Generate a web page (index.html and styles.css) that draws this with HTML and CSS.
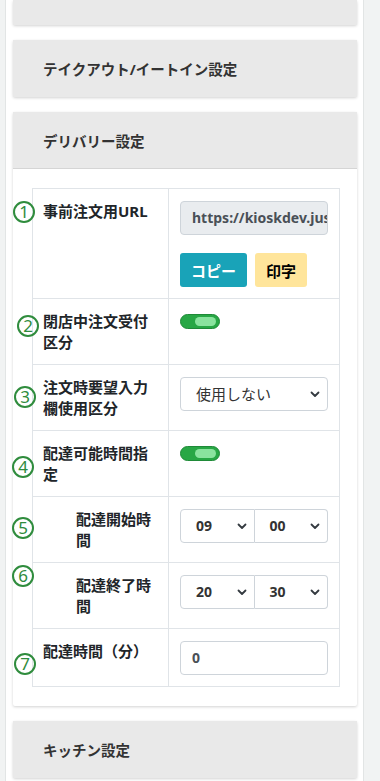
FILE: index.html
```html
<!DOCTYPE html>
<html lang="ja">

<head>
    <meta charset="UTF-8">
    <meta name="viewport" content="width=device-width, initial-scale=1.0">
    <title>店舗設定</title>
    <link rel="stylesheet" href="styles.css">
</head>

<body>
    <div class="page">
        <div class="card card-cut">
            <div class="card-header short"></div>
        </div>

        <div class="card">
            <div class="card-header">テイクアウト/イートイン設定</div>
        </div>

        <div class="card">
            <div class="card-header open">デリバリー設定</div>
            <div class="card-body">
                <table class="settings">
                    <colgroup>
                        <col class="col-label">
                        <col class="col-value">
                    </colgroup>
                    <tr class="row-url">
                        <td class="label">
                            <span class="mark m1">1</span>
                            事前注文用URL
                        </td>
                        <td class="value">
                            <div class="input readonly">https://kioskdev.jus</div>
                            <div class="buttons">
                                <button class="btn btn-info">コピー</button>
                                <button class="btn btn-warning">印字</button>
                            </div>
                        </td>
                    </tr>
                    <tr>
                        <td class="label">
                            <span class="mark m2">2</span>
                            閉店中注文受付区分
                        </td>
                        <td class="value">
                            <div class="switch"><span class="knob"></span></div>
                        </td>
                    </tr>
                    <tr>
                        <td class="label">
                            <span class="mark m3">3</span>
                            注文時要望入力欄使用区分
                        </td>
                        <td class="value">
                            <div class="select">
                                <span>使用しない</span>
                                <svg width="10" height="7" viewBox="0 0 10 7"><path d="M1.5 1.5 5 5l3.5-3.5" fill="none" stroke="#343a40" stroke-width="1.8" stroke-linecap="round" stroke-linejoin="round"/></svg>
                            </div>
                        </td>
                    </tr>
                    <tr>
                        <td class="label">
                            <span class="mark m4">4</span>
                            配達可能時間指定
                        </td>
                        <td class="value">
                            <div class="switch"><span class="knob"></span></div>
                        </td>
                    </tr>
                    <tr>
                        <td class="label indent">
                            <span class="mark m5">5</span>
                            配達開始時間
                        </td>
                        <td class="value">
                            <div class="time-group">
                                <div class="select num">
                                    <span>09</span>
                                    <svg width="10" height="7" viewBox="0 0 10 7"><path d="M1.5 1.5 5 5l3.5-3.5" fill="none" stroke="#343a40" stroke-width="1.8" stroke-linecap="round" stroke-linejoin="round"/></svg>
                                </div>
                                <div class="select num">
                                    <span>00</span>
                                    <svg width="10" height="7" viewBox="0 0 10 7"><path d="M1.5 1.5 5 5l3.5-3.5" fill="none" stroke="#343a40" stroke-width="1.8" stroke-linecap="round" stroke-linejoin="round"/></svg>
                                </div>
                            </div>
                        </td>
                    </tr>
                    <tr>
                        <td class="label indent">
                            <span class="mark m6">6</span>
                            配達終了時間
                        </td>
                        <td class="value">
                            <div class="time-group">
                                <div class="select num">
                                    <span>20</span>
                                    <svg width="10" height="7" viewBox="0 0 10 7"><path d="M1.5 1.5 5 5l3.5-3.5" fill="none" stroke="#343a40" stroke-width="1.8" stroke-linecap="round" stroke-linejoin="round"/></svg>
                                </div>
                                <div class="select num">
                                    <span>30</span>
                                    <svg width="10" height="7" viewBox="0 0 10 7"><path d="M1.5 1.5 5 5l3.5-3.5" fill="none" stroke="#343a40" stroke-width="1.8" stroke-linecap="round" stroke-linejoin="round"/></svg>
                                </div>
                            </div>
                        </td>
                    </tr>
                    <tr>
                        <td class="label">
                            <span class="mark m7">7</span>
                            配達時間（分）
                        </td>
                        <td class="value">
                            <div class="input">0</div>
                        </td>
                    </tr>
                </table>
            </div>
        </div>

        <div class="card">
            <div class="card-header">キッチン設定</div>
        </div>
    </div>
</body>

</html>
```

FILE: styles.css
```css
body {
    margin: 0;
    padding: 0;
    background: #f1f3f3;
    font-family: "Noto Sans", "Noto Sans CJK JP", sans-serif;
    color: #212529;
}

.page {
    width: 344px;
    margin-left: 5px;
    padding: 0 6px 20px 7px;
    background: #fff;
    border-left: 1px solid #e2e5e5;
    border-right: 1px solid #e2e5e5;
    min-height: 781px;
}

.card {
    background: #fff;
    margin-bottom: 15px;
    box-shadow: 0 1px 3px rgba(0, 0, 0, 0.18);
    border-radius: 2px;
}

.card-header {
    height: 57px;
    display: flex;
    align-items: center;
    padding-left: 30px;
    background: #e9e9e9;
    color: #333;
    font-size: 14.5px;
    font-weight: bold;
}

.card-header.short {
    height: 25px;
}

.card-header.open {
    border-bottom: 1px solid #d5d5d5;
    height: 56px;
}

.card-body {
    padding: 19px 18px 19px 19px;
}

.settings {
    width: 307px;
    table-layout: fixed;
    border-collapse: collapse;
}

.col-label {
    width: 136px;
}

.col-value {
    width: 171px;
}

.settings td {
    border: 1px solid #e0e4e8;
    vertical-align: top;
    font-size: 15px;
    line-height: 20.5px;
}

.label {
    position: relative;
    padding: 12px 8px 12px 10px;
    font-weight: bold;
}

.label.indent {
    padding-left: 43px;
    padding-right: 10px;
}

.value {
    padding: 12px 11px 11px 11px;
}

/* annotation marks */
.mark {
    position: absolute;
    width: 18px;
    height: 18px;
    border: 2px solid #2f8c3d;
    border-radius: 50%;
    color: #2f8c3d;
    font-size: 17px;
    line-height: 18px;
    text-align: center;
    font-weight: normal;
}

.m1 { left: -20px; top: 12px; }
.m2 { left: -16px; top: 16px; }
.m3 { left: -19px; top: 21px; }
.m4 { left: -21px; top: 25px; }
.m5 { left: -21px; top: 20px; }
.m6 { left: -21px; top: 2px; }
.m7 { left: -19px; top: 24px; }

.input {
    height: 34px;
    box-sizing: border-box;
    border: 1px solid #ced4da;
    border-radius: 4px;
    padding: 0 11px;
    display: flex;
    align-items: center;
    font-size: 14px;
    font-weight: bold;
    color: #495057;
    white-space: nowrap;
    overflow: hidden;
}

.input.readonly {
    background: #e9ecef;
}

.buttons {
    display: flex;
    gap: 8px;
    margin-top: 18px;
}

.btn {
    height: 34px;
    padding: 0 11px;
    border: none;
    border-radius: 3px;
    font-family: inherit;
    font-size: 15px;
    font-weight: bold;
}

.btn-info {
    background: #19a3b8;
    color: #fff;
    width: 67px;
}

.btn-warning {
    background: #ffe59b;
    color: #000;
    width: 52px;
}

.switch {
    position: relative;
    width: 40px;
    height: 15px;
    box-sizing: border-box;
    margin-top: 3px;
    border: 1px solid #1f8a38;
    border-radius: 8px;
    background: #28a745;
}

.switch .knob {
    position: absolute;
    right: 3px;
    top: 2px;
    width: 21px;
    height: 9px;
    border-radius: 5px;
    background: #8ae39e;
}

.select {
    height: 34px;
    box-sizing: border-box;
    border: 1px solid #ced4da;
    border-radius: 4px;
    padding: 0 7px 0 15px;
    display: flex;
    align-items: center;
    justify-content: space-between;
    font-size: 15px;
    color: #333;
}

.select.num {
    flex: 1;
    font-weight: bold;
    font-size: 14px;
}

.time-group {
    display: flex;
}

.time-group .select:first-child {
    border-radius: 4px 0 0 4px;
}

.time-group .select:last-child {
    border-left: none;
    border-radius: 0 4px 4px 0;
}
```
